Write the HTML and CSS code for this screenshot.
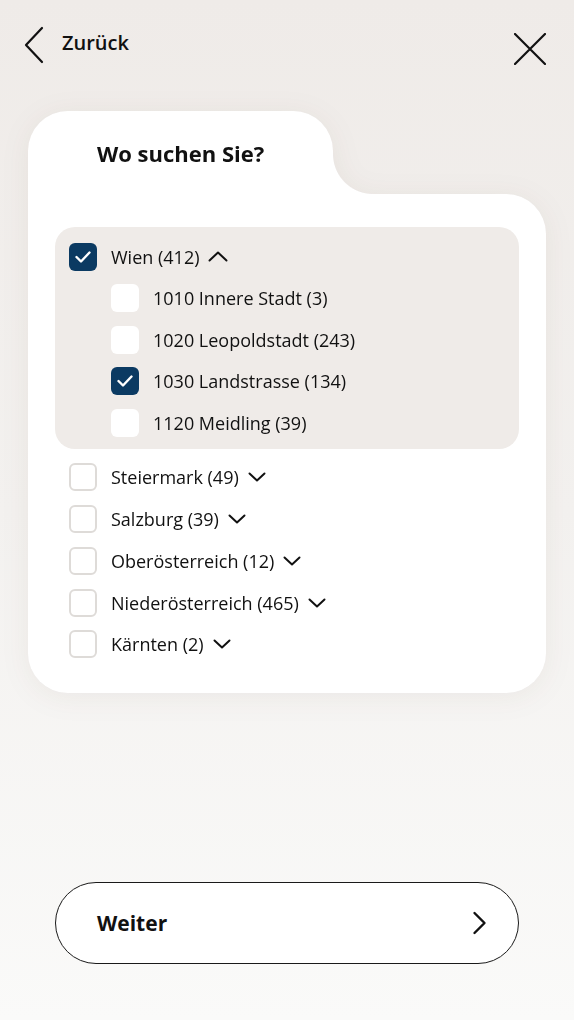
FILE: index.html
```html
<!DOCTYPE html>
<html lang="de">
<head>
    <meta charset="UTF-8">
    <title>Wo suchen Sie?</title>
    <link rel="stylesheet" href="styles.css">
</head>
<body>
<div class="page">
    <div class="topbar">
        <a class="back" href="#">
            <svg width="20" height="38" viewBox="0 0 20 38"><path d="M18 2 L2 19 L18 36" fill="none" stroke="#111" stroke-width="2.2" stroke-linecap="round" stroke-linejoin="round"/></svg>
            <span>Zurück</span>
        </a>
        <a class="close" href="#">
            <svg width="32" height="32" viewBox="0 0 32 32"><path d="M1 1 L31 31 M31 1 L1 31" fill="none" stroke="#111" stroke-width="2.2" stroke-linecap="round"/></svg>
        </a>
    </div>

    <div class="card">
        <div class="card-head">
            <div class="tab"><h1>Wo suchen Sie?</h1></div>
            <div class="notch"></div>
        </div>
        <div class="card-body">
            <div class="group">
                <label class="row">
                    <span class="box checked"><svg width="16" height="12" viewBox="0 0 16 12"><path d="M1.5 6 L6 10.5 L14.5 1.5" fill="none" stroke="#fff" stroke-width="2.4" stroke-linecap="round" stroke-linejoin="round"/></svg></span>
                    <span class="name">Wien (412)</span>
                    <svg class="chev" width="20" height="11" viewBox="0 0 20 11"><path d="M1.5 9.5 L10 1.5 L18.5 9.5" fill="none" stroke="#111" stroke-width="2" stroke-linecap="round" stroke-linejoin="round"/></svg>
                </label>
                <div class="sub">
                    <label class="row">
                        <span class="box"></span>
                        <span class="name">1010 Innere Stadt (3)</span>
                    </label>
                    <label class="row">
                        <span class="box"></span>
                        <span class="name">1020 Leopoldstadt (243)</span>
                    </label>
                    <label class="row">
                        <span class="box checked"><svg width="16" height="12" viewBox="0 0 16 12"><path d="M1.5 6 L6 10.5 L14.5 1.5" fill="none" stroke="#fff" stroke-width="2.4" stroke-linecap="round" stroke-linejoin="round"/></svg></span>
                        <span class="name">1030 Landstrasse (134)</span>
                    </label>
                    <label class="row">
                        <span class="box"></span>
                        <span class="name">1120 Meidling (39)</span>
                    </label>
                </div>
            </div>

            <div class="list">
                <label class="row">
                    <span class="box line"></span>
                    <span class="name">Steiermark (49)</span>
                    <svg class="chev" width="18" height="10" viewBox="0 0 18 10"><path d="M1.5 1.5 L9 8.5 L16.5 1.5" fill="none" stroke="#111" stroke-width="2" stroke-linecap="round" stroke-linejoin="round"/></svg>
                </label>
                <label class="row">
                    <span class="box line"></span>
                    <span class="name">Salzburg (39)</span>
                    <svg class="chev" width="18" height="10" viewBox="0 0 18 10"><path d="M1.5 1.5 L9 8.5 L16.5 1.5" fill="none" stroke="#111" stroke-width="2" stroke-linecap="round" stroke-linejoin="round"/></svg>
                </label>
                <label class="row">
                    <span class="box line"></span>
                    <span class="name">Oberösterreich (12)</span>
                    <svg class="chev" width="18" height="10" viewBox="0 0 18 10"><path d="M1.5 1.5 L9 8.5 L16.5 1.5" fill="none" stroke="#111" stroke-width="2" stroke-linecap="round" stroke-linejoin="round"/></svg>
                </label>
                <label class="row">
                    <span class="box line"></span>
                    <span class="name">Niederösterreich (465)</span>
                    <svg class="chev" width="18" height="10" viewBox="0 0 18 10"><path d="M1.5 1.5 L9 8.5 L16.5 1.5" fill="none" stroke="#111" stroke-width="2" stroke-linecap="round" stroke-linejoin="round"/></svg>
                </label>
                <label class="row">
                    <span class="box line"></span>
                    <span class="name">Kärnten (2)</span>
                    <svg class="chev" width="18" height="10" viewBox="0 0 18 10"><path d="M1.5 1.5 L9 8.5 L16.5 1.5" fill="none" stroke="#111" stroke-width="2" stroke-linecap="round" stroke-linejoin="round"/></svg>
                </label>
            </div>
        </div>
    </div>

    <a class="next" href="#">
        <span>Weiter</span>
        <svg width="16" height="24" viewBox="0 0 16 24"><path d="M2.5 2 L12.5 12 L2.5 22" fill="none" stroke="#111" stroke-width="2.4" stroke-linecap="round" stroke-linejoin="round"/></svg>
    </a>
</div>
</body>
</html>
```

FILE: styles.css
```css
* {
    margin: 0;
    padding: 0;
    box-sizing: border-box;
}
body {
    font-family: "Open Sans", "Noto Sans", sans-serif;
    color: #111;
    background: linear-gradient(#efebe8 0%, #f3f1ef 50%, #fafaf9 100%);
}
a {
    color: inherit;
    text-decoration: none;
}
.page {
    height: 1020px;
    display: flex;
    flex-direction: column;
}
.topbar {
    display: flex;
    justify-content: space-between;
    align-items: center;
    padding: 26px 28px 0 24px;
    height: 63px;
}
.back {
    display: flex;
    align-items: center;
    gap: 18px;
    font-size: 20px;
    font-weight: 600;
}
.back span {
    margin-top: -4px;
}
.close {
    display: flex;
    margin-top: 8px;
}
.card {
    margin: 48px 28px 0;
    filter: drop-shadow(0 4px 14px rgba(60, 40, 20, 0.06));
}
.card-head {
    display: flex;
    align-items: flex-end;
}
.tab {
    width: 305px;
    height: 83px;
    background: #fff;
    border-radius: 40px 40px 0 0;
    padding: 30px 0 0 69px;
}
.tab h1 {
    font-size: 22px;
    font-weight: 700;
    line-height: 24px;
}
.notch {
    width: 40px;
    height: 40px;
    background: radial-gradient(circle at 100% 0, transparent 39.5px, #fff 40.5px);
}
.card-body {
    background: #fff;
    border-radius: 0 40px 40px 40px;
    padding: 33px 27px 28px;
}
.group {
    background: #efebe8;
    border-radius: 20px;
    padding: 9px 14px 5px;
}
.sub {
    padding-left: 42px;
}
.row {
    display: flex;
    align-items: center;
    height: 41.5px;
    font-size: 18px;
    cursor: pointer;
}
.list {
    padding: 8px 14px 0;
}
.list .row {
    height: 41.75px;
}
.box {
    width: 28px;
    height: 28px;
    border-radius: 6px;
    background: #fff;
    display: flex;
    align-items: center;
    justify-content: center;
    flex-shrink: 0;
    margin-right: 14px;
}
.box.checked {
    background: #0b3a62;
}
.box.line {
    border: 2px solid #dedbd8;
}
.name {
    line-height: 24px;
}
.chev {
    margin-left: 9px;
}
.next {
    margin: auto 55px 56px;
    height: 82px;
    border: 1.5px solid #1a1a1a;
    border-radius: 41px;
    background: #fff;
    display: flex;
    align-items: center;
    justify-content: space-between;
    padding: 0 30px 0 41px;
    font-size: 21px;
    font-weight: 700;
}
```
